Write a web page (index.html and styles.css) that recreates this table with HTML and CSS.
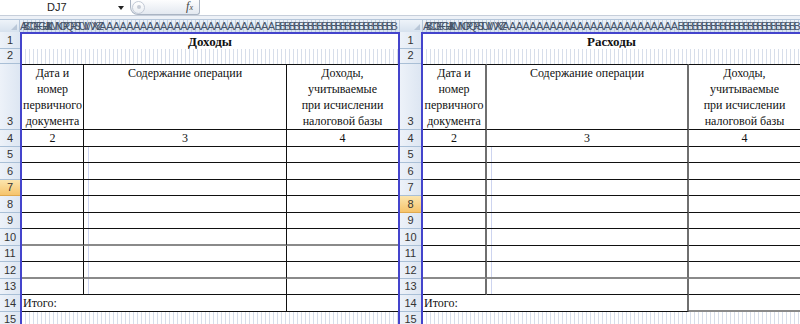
FILE: index.html
```html
<!DOCTYPE html>
<html lang="ru">
<head>
<meta charset="utf-8">
<title>Книга учета</title>
<link rel="stylesheet" href="styles.css">
</head>
<body>
<div class="screen">
  <section class="pane left">
    <div class="toolbar">
      <span class="namebox">DJ7</span>
      <span class="drop"></span>
      <span class="fxbar"><span class="knob"><span class="dot"></span></span><span class="fx">f<span class="sub">x</span></span></span>
    </div>
    <div class="strip"></div>
    <div class="colhead">
      <div class="corner"><span class="tri"></span></div>
      <div class="letters"><span class="l1">ABCDEFGHIJKLMNOPQRSTUVWXYZ</span><span class="l2">AAAAAAAAAAAAAAAAAAAAAAAAAA</span><span class="l3">BBBBBBBBBBBBBBBBBBBBBBBBBB</span></div>
    </div>
    <div class="body">
      <div class="rowhead">
        <div>1</div><div>2</div><div>3</div><div>4</div><div>5</div><div>6</div><div class="active">7</div><div>8</div><div>9</div><div>10</div><div>11</div><div>12</div><div>13</div><div>14</div><div>15</div>
      </div>
      <div class="sheet">
        <div class="title">Доходы</div>
        <div class="gridrow"></div>
        <div class="hd ca">Дата и<br>номер<br>первичного<br>документа</div>
        <div class="hd cb">Содержание операции</div>
        <div class="hd">Доходы,<br>учитываемые<br>при исчислении<br>налоговой базы</div>
        <div class="num ca">2</div><div class="num cb">3</div><div class="num">4</div>
        <div class="c ca"></div><div class="c cb g"></div><div class="c"></div>
        <div class="c ca"></div><div class="c cb g"></div><div class="c"></div>
        <div class="c ca"></div><div class="c cb g"></div><div class="c"></div>
        <div class="c ca"></div><div class="c cb g"></div><div class="c"></div>
        <div class="c ca"></div><div class="c cb g"></div><div class="c"></div>
        <div class="c ca soft"></div><div class="c cb g soft"></div><div class="c soft"></div>
        <div class="c ca"></div><div class="c cb g"></div><div class="c"></div>
        <div class="c ca soft"></div><div class="c cb g soft"></div><div class="c soft"></div>
        <div class="c ca"></div><div class="c cb g"></div><div class="c"></div>
        <div class="tot">Итого:</div><div class="c"></div>
        <div class="gridrow"></div>
      </div>
    </div>
  </section>
  <section class="pane right">
    <div class="toolbar"></div>
    <div class="strip"></div>
    <div class="colhead">
      <div class="corner"><span class="tri"></span></div>
      <div class="letters"><span class="l1">ABCDEFGHIJKLMNOPQRSTUVWXYZ</span><span class="l2">AAAAAAAAAAAAAAAAAAAAAAAAAA</span><span class="l3">BBBBBBBBBBBBBBBBBBBBBBBBBB</span></div>
    </div>
    <div class="body">
      <div class="rowhead">
        <div>1</div><div>2</div><div>3</div><div>4</div><div>5</div><div>6</div><div>7</div><div class="active">8</div><div>9</div><div>10</div><div>11</div><div>12</div><div>13</div><div>14</div><div>15</div>
      </div>
      <div class="sheet">
        <div class="title">Расходы</div>
        <div class="gridrow"></div>
        <div class="hd ca">Дата и<br>номер<br>первичного<br>документа</div>
        <div class="hd cb">Содержание операции</div>
        <div class="hd">Доходы,<br>учитываемые<br>при исчислении<br>налоговой базы</div>
        <div class="num ca">2</div><div class="num cb">3</div><div class="num">4</div>
        <div class="c ca"></div><div class="c cb g"></div><div class="c"></div>
        <div class="c ca"></div><div class="c cb g"></div><div class="c"></div>
        <div class="c ca"></div><div class="c cb g"></div><div class="c"></div>
        <div class="c ca"></div><div class="c cb g"></div><div class="c"></div>
        <div class="c ca"></div><div class="c cb g"></div><div class="c"></div>
        <div class="c ca"></div><div class="c cb g"></div><div class="c"></div>
        <div class="c ca"></div><div class="c cb g"></div><div class="c"></div>
        <div class="c ca soft"></div><div class="c cb g soft"></div><div class="c soft"></div>
        <div class="c ca"></div><div class="c cb g"></div><div class="c"></div>
        <div class="tot soft">Итого:</div><div class="c soft"></div>
        <div class="gridrow"></div>
      </div>
    </div>
  </section>
</div>
</body>
</html>
```

FILE: styles.css
```css
* { box-sizing: border-box; margin: 0; padding: 0; }
html, body { width: 800px; height: 324px; overflow: hidden; background: #fff; }
body { font-family: "Liberation Sans", Arial, sans-serif; }

.screen { display: flex; width: 800px; height: 324px; }
.pane { width: 400px; height: 324px; display: flex; flex-direction: column; overflow: hidden; }

/* formula bar */
.toolbar { height: 16px; flex: none; border-bottom: 1px solid #c6ceda; display: flex; align-items: center; background: #fff; }
.namebox { width: 118px; padding-left: 47px; font-size: 11px; line-height: 15px; color: #222; }
.drop { width: 0; height: 0; border-left: 3px solid transparent; border-right: 3px solid transparent; border-top: 4px solid #222; margin-right: 6px; }
.fxbar { width: 70px; height: 15px; align-self: flex-start; border: 1px solid #aab4c3; border-top: none; border-radius: 0 0 3px 8px; background: linear-gradient(#fdfdfe, #e3e8f0); display: flex; align-items: center; justify-content: space-between; padding: 0 6px 0 1px; }
.knob { width: 13px; height: 13px; border-radius: 50%; border: 1px solid #c3cad6; background: linear-gradient(#fff, #e9edf3); display: flex; align-items: center; justify-content: center; }
.dot { width: 4px; height: 4px; border-radius: 50%; background: #c6ccd6; }
.fx { font: italic 12px "Liberation Serif", serif; color: #444; line-height: 13px; }
.fx .sub { font-size: 8px; }

.strip { height: 3px; flex: none; background: #edf1f7; }

/* column header */
.colhead { height: 13px; flex: none; display: flex; background: linear-gradient(#eef3f9, #d6e1ee); border-top: 1px solid #b5c6da; }
.corner { width: 20px; flex: none; display: flex; justify-content: flex-end; align-items: flex-end; padding: 0 2px 2px 0; border-right: 1px solid #b5c6da; }
.right .corner { width: 23px; }
.tri { width: 0; height: 0; border-left: 6px solid transparent; border-bottom: 6px solid #b9c7d8; }
.letters { flex: 1; overflow: hidden; white-space: nowrap; font-size: 11px; line-height: 12px; color: #46546a;
  background: repeating-linear-gradient(to right, transparent 0 3px, rgba(150, 172, 200, .45) 3px 4px); }
.l1 { letter-spacing: -4.4px; }
.l2 { letter-spacing: -0.6px; }
.l3 { letter-spacing: -2.7px; }

/* body */
.body { flex: 1; min-height: 0; display: flex; overflow: hidden; }
.rowhead { width: 20px; flex: none; display: grid;
  grid-template-rows: 17px 15px 66px 17px 16px 17px 16px 17px 16px 17px 16px 17px 16px 17px 16px; }
.right .rowhead { width: 21px; }
.rowhead div { border-bottom: 1px solid #a9bfd6; background: linear-gradient(to right, #edf2f9, #dde6f2);
  font-size: 11px; line-height: 13px; color: #333; display: flex; align-items: flex-end; justify-content: center; padding-bottom: 1px; }
.rowhead div.active { background: linear-gradient(#fbe5ae, #f6c46c); border-bottom-color: #e0a94e; }

.sheet { flex: 1; min-width: 0; overflow: hidden; border-top: 2px solid #4444cc; border-left: 2px solid #4444cc;
  display: grid; align-content: start;
  grid-template-rows: 15px 15px 66px 17px 16px 17px 16px 17px 16px 17px 16px 17px 16px 17px 16px;
  font: 12px "Liberation Serif", "Times New Roman", serif; color: #111; }
.left .sheet { border-right: 2px solid #4444cc; grid-template-columns: 62px 203px 111px; }
.right .sheet { grid-template-columns: 64px 202px 111px; }

.title { grid-column: 1 / -1; text-align: center; font-weight: bold; font-size: 13px; line-height: 15px; }
.gridrow { grid-column: 1 / -1; background: repeating-linear-gradient(to right, #fff 0 3px, #d7deea 3px 4px); }
.hd { border-top: 1px solid #111; border-bottom: 1px solid #111; text-align: center; line-height: 16px; }
.num { border-bottom: 1px solid #111; text-align: center; line-height: 16px; }
.c { border-bottom: 1px solid #111; }
.ca, .cb { border-right: 1px solid #111; }
.right .ca, .right .cb { border-right: 2px solid #6f6f6f; }
.g { background: linear-gradient(to right, transparent 4px, #cdd4ef 4px, #cdd4ef 5px, transparent 5px); }
.soft { border-bottom: 2px solid #8a8a8a; }
.tot { grid-column: span 2; border-bottom: 1px solid #111; border-right: 1px solid #111; padding-left: 1px; line-height: 16px; }
.right .tot { border-right: 2px solid #6f6f6f; }
```
